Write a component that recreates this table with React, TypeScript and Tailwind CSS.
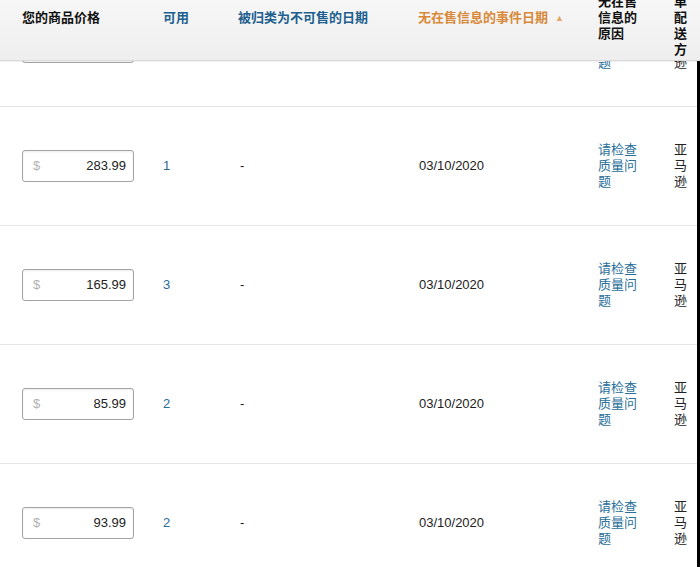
const FONT = "font-['Liberation_Sans','Noto_Sans_CJK_SC',sans-serif]";

type Row = { price: string; qty: string };

const ROWS: Row[] = [
  { price: '129.99', qty: '1' },
  { price: '283.99', qty: '1' },
  { price: '165.99', qty: '3' },
  { price: '85.99', qty: '2' },
  { price: '93.99', qty: '2' },
];

function PriceInput({ value }: { value: string }) {
  return (
    <div className="flex h-[32px] w-[112px] items-center justify-between rounded-[3px] border border-[#a3a3a3] bg-white pl-[10px] pr-[7px] shadow-[inset_0_1px_2px_rgba(0,0,0,0.08)]">
      <span className="text-[#b3b3b3]">$</span>
      <span className="text-[#222]">{value}</span>
    </div>
  );
}

function TableRow({ row }: { row: Row }) {
  return (
    <div className="flex h-[119px] items-center border-b border-[#e6e6e6] pl-[22px] text-[13px] leading-[16px]">
      <div className="w-[141px] shrink-0">
        <PriceInput value={row.price} />
      </div>
      <div className="w-[75px] shrink-0 text-[#2a6b94]">{row.qty}</div>
      <div className="w-[180px] shrink-0 pl-[2px] text-[#222]">-</div>
      <div className="w-[180px] shrink-0 pl-px text-[#222]">03/10/2020</div>
      <div className="w-[76px] shrink-0">
        <span className="block w-[40px] text-[#2a6f99]">请检查质量问题</span>
      </div>
      <div className="w-[14px] shrink-0 text-[#222]">亚马逊</div>
    </div>
  );
}

export default function App() {
  return (
    <div className={`relative h-[567px] w-[700px] overflow-hidden bg-white ${FONT}`}>
      {/* sticky header sits over the first (scrolled) row */}
      <div className="absolute inset-x-0 top-0 z-10 flex h-[61px] overflow-hidden border-b border-[#d9d9d9] bg-gradient-to-b from-[#f7f7f7] to-[#eeeeee] pl-[22px] text-[13px] font-bold leading-[16px] shadow-[0_1px_1px_rgba(0,0,0,0.05)]">
        <div className="w-[141px] shrink-0 pt-[10px] text-[#111]">您的商品价格</div>
        <div className="w-[75px] shrink-0 pt-[10px] text-[#1d5f8f]">可用</div>
        <div className="w-[180px] shrink-0 pt-[10px] text-[#1d5f8f]">被归类为不可售的日期</div>
        <div className="flex w-[180px] shrink-0 items-start gap-[7px] pt-[10px] text-[#d8893a]">
          <span>无在售信息的事件日期</span>
          <span className="mt-[4px] text-[9px] leading-[9px] text-[#e2a867]">▲</span>
        </div>
        <div className="w-[76px] shrink-0 -mt-[6px] text-[#111]">
          <span className="block w-[40px]">无在售信息的原因</span>
        </div>
        <div className="w-[14px] shrink-0 -mt-[6px] text-[#111]">单配送方</div>
      </div>

      <div className="mt-[-12px] h-[600px] border-r-[3px] border-black">
        {ROWS.map((r, i) => (
          <TableRow key={i} row={r} />
        ))}
      </div>
    </div>
  );
}
